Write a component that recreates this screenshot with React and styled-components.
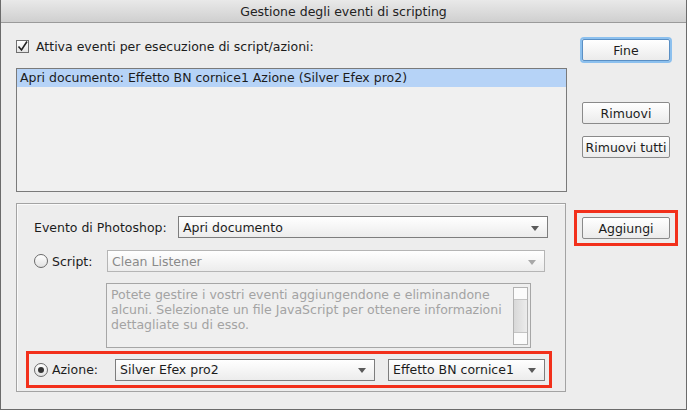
import React from 'react';
import styled, { createGlobalStyle } from 'styled-components';

const GlobalStyle = createGlobalStyle`
  html, body {
    margin: 0;
    padding: 0;
    background: #ededed;
  }
  * {
    box-sizing: border-box;
  }
`;

const Window = styled.div`
  width: 687px;
  height: 410px;
  background: #ededed;
  border: 1px solid #6b6b6b;
  border-top: none;
  font-family: 'DejaVu Sans', sans-serif;
  font-size: 12.5px;
  color: #1c1c1c;
  overflow: hidden;
`;

const TitleBar = styled.div`
  height: 23px;
  background: linear-gradient(#e9e9e9, #cfcfcf);
  border-bottom: 1px solid #9a9a9a;
  display: flex;
  align-items: center;
  justify-content: center;
  font-size: 12.5px;
  color: #222;
`;

const Body = styled.div`
  display: flex;
  padding: 0 0 0 15px;
`;

const LeftCol = styled.div`
  width: 551px;
  display: flex;
  flex-direction: column;
`;

const RightCol = styled.div`
  flex: 1;
  display: flex;
  flex-direction: column;
  padding-left: 7px;
`;

const CheckRow = styled.label`
  display: flex;
  align-items: center;
  gap: 7px;
  height: 18px;
  margin-top: 14px;
`;

const CheckBox = styled.span`
  width: 13px;
  height: 13px;
  border: 1px solid #6f6f6f;
  background: linear-gradient(#fff, #e4e4e4);
  display: inline-flex;
  align-items: center;
  justify-content: center;
`;

const List = styled.div`
  margin-top: 13px;
  height: 124px;
  border: 1px solid #7a7a7a;
  background: #f0f0f0;
`;

const ListRow = styled.div`
  height: 18px;
  line-height: 18px;
  padding-left: 3px;
  background: ${(p) => (p.$selected ? '#b6d3f7' : 'transparent')};
`;

const Group = styled.div`
  margin-top: 11px;
  width: 550px;
  height: 189px;
  border: 1px solid #a3a3a3;
  box-shadow: inset 1px 1px 0 #fafafa;
  padding: 12px 0 0 9px;
  display: flex;
  flex-direction: column;
`;

const FieldRow = styled.div`
  display: flex;
  align-items: center;
  height: 22px;
  padding-left: 8px;
  margin-top: ${(p) => p.$mt || 0}px;
`;

const Label = styled.span`
  width: ${(p) => p.$w}px;
  flex-shrink: 0;
`;

const Radio = styled.span`
  width: 14px;
  height: 14px;
  border-radius: 50%;
  border: 1px solid #6a6a6a;
  background: linear-gradient(#fff, #e2e2e2);
  display: inline-flex;
  align-items: center;
  justify-content: center;
  margin-right: 4px;
  flex-shrink: 0;
  &::after {
    content: '';
    width: 6px;
    height: 6px;
    border-radius: 50%;
    background: ${(p) => (p.$checked ? '#333' : 'transparent')};
  }
`;

const Select = styled.div`
  width: ${(p) => p.$w}px;
  height: 22px;
  border: 1px solid ${(p) => (p.$disabled ? '#b5b5b5' : '#7d7d7d')};
  background: linear-gradient(#ffffff, #ececec);
  color: ${(p) => (p.$disabled ? '#8a8a8a' : '#1c1c1c')};
  display: flex;
  align-items: center;
  justify-content: space-between;
  padding: 0 8px 0 4px;
  margin-left: ${(p) => p.$ml || 0}px;
  flex-shrink: 0;
`;

const Arrow = styled.span`
  width: 0;
  height: 0;
  border-left: 4px solid transparent;
  border-right: 4px solid transparent;
  border-top: 5px solid ${(p) => (p.$disabled ? '#a8a8a8' : '#5a5a5a')};
  margin-top: 2px;
`;

const TextArea = styled.div`
  margin: 11px 0 0 80px;
  width: 425px;
  height: 65px;
  border: 1px solid #a6a6a6;
  background: #efefef;
  display: flex;
  padding: 3px 2px 2px 4px;
`;

const AreaText = styled.div`
  flex: 1;
  color: #a3a3a3;
  line-height: 15px;
  padding-right: 8px;
`;

const ScrollBar = styled.div`
  width: 15px;
  border: 1px solid #b3b3b3;
  background: linear-gradient(90deg, #d8d8d8, #ececec);
  display: flex;
  flex-direction: column;
  justify-content: space-between;
`;

const ScrollEnd = styled.div`
  height: 12px;
  background: #fbfbfb;
  border-${(p) => p.$side}: 1px solid #c4c4c4;
`;

const Highlight = styled.div`
  margin-top: 3px;
  width: 526px;
  height: 37px;
  border: 3px solid #f2301b;
  display: flex;
  align-items: center;
  padding-left: 5px;
`;

const Button = styled.div`
  width: 88px;
  height: 22px;
  border: 1px solid #8a8a8a;
  border-radius: 2px;
  background: linear-gradient(#ffffff, #ebebeb);
  display: flex;
  align-items: center;
  justify-content: center;
  margin-top: ${(p) => p.$mt || 0}px;
  margin-left: ${(p) => p.$ml || 8}px;
  box-shadow: ${(p) => (p.$focus ? '0 0 0 2px #8cc0ee' : 'none')};
  border-color: ${(p) => (p.$focus ? '#5a8fc4' : '#8a8a8a')};
`;

const RedFrame = styled.div`
  margin-top: 52px;
  width: 104px;
  height: 36px;
  border: 3px solid #f2301b;
  display: flex;
  align-items: center;
`;

export default function App() {
  return (
    <>
      <GlobalStyle />
      <Window>
        <TitleBar>Gestione degli eventi di scripting</TitleBar>
        <Body>
          <LeftCol>
            <CheckRow>
              <CheckBox>
                <svg width="11" height="11" viewBox="0 0 11 11">
                  <path d="M1.5 5.5 L4.5 9 L10 0.5" fill="none" stroke="#222" strokeWidth="1.6" />
                </svg>
              </CheckBox>
              Attiva eventi per esecuzione di script/azioni:
            </CheckRow>
            <List>
              <ListRow $selected>Apri documento: Effetto BN cornice1 Azione (Silver Efex pro2)</ListRow>
            </List>
            <Group>
              <FieldRow>
                <Label $w={144}>Evento di Photoshop:</Label>
                <Select $w={370}>
                  Apri documento
                  <Arrow />
                </Select>
              </FieldRow>
              <FieldRow $mt={12}>
                <Radio />
                <Label $w={55}>Script:</Label>
                <Select $w={438} $disabled>
                  Clean Listener
                  <Arrow $disabled />
                </Select>
              </FieldRow>
              <TextArea>
                <AreaText>
                  Potete gestire i vostri eventi aggiungendone e eliminandone alcuni. Selezionate un file JavaScript per ottenere informazioni dettagliate su di esso.
                </AreaText>
                <ScrollBar>
                  <ScrollEnd $side="bottom" />
                  <ScrollEnd $side="top" />
                </ScrollBar>
              </TextArea>
              <Highlight>
                <Radio $checked />
                <Label $w={63}>Azione:</Label>
                <Select $w={260}>
                  Silver Efex pro2
                  <Arrow />
                </Select>
                <Select $w={157} $ml={13}>
                  Effetto BN cornice1
                  <Arrow />
                </Select>
              </Highlight>
            </Group>
          </LeftCol>
          <RightCol>
            <Button $focus $mt={16}>Fine</Button>
            <Button $mt={41}>Rimuovi</Button>
            <Button $mt={12}>Rimuovi tutti</Button>
            <RedFrame>
              <Button $ml={5}>Aggiungi</Button>
            </RedFrame>
          </RightCol>
        </Body>
      </Window>
    </>
  );
}
